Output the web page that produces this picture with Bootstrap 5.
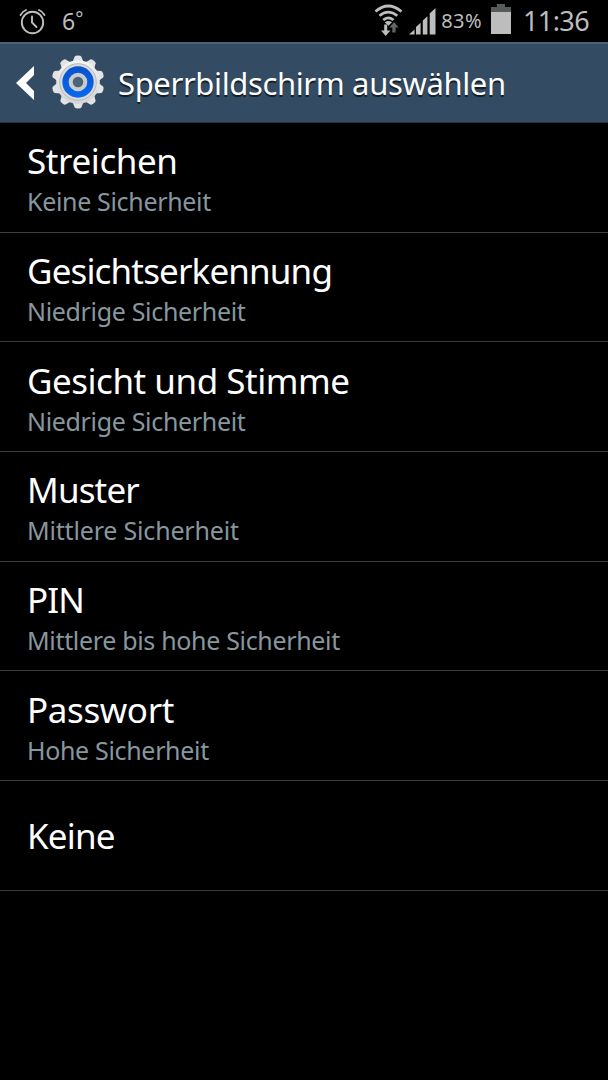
<!DOCTYPE html>
<html lang="de">
<head>
<meta charset="utf-8">
<meta name="viewport" content="width=device-width, initial-scale=1">
<title>Sperrbildschirm auswählen</title>
<link href="https://cdn.jsdelivr.net/npm/bootstrap@5.3.0/dist/css/bootstrap.min.css" rel="stylesheet">
<style>
body{background:#000;font-family:"Noto Sans",sans-serif;height:1080px;overflow:hidden}
.statusbar{height:42px;color:#bdbdbd;padding:0 19px 0 19px}
.statusbar svg{display:block;flex:none}
.temp{font-size:23px;line-height:42px;margin-left:16px}
.deg{font-size:19px;line-height:1;vertical-align:4px}
.wifi{margin-bottom:2px}
.signal{margin:0 0 1px 6px}
.pct{font-size:20px;line-height:42px;letter-spacing:.4px;margin-left:4px}
.battery{margin:0 0 3px 9px}
.clock{font-size:27px;line-height:40px;margin-left:12px;letter-spacing:-.6px}
.titlebar{height:81px;background:#344c63;border-top:2px solid #4b637a;border-bottom:1px solid #25333f;padding:0 0 0 15px}
.titlebar h1{font-size:31px;line-height:40px;color:#fff;text-shadow:0 2px 1px rgba(0,0,0,.65);margin-left:12px;font-weight:400;letter-spacing:-.37px}
.gear{margin:0 0 2px 15px}
.options .list-group-item{height:109.7px;background:#000;border:0;border-bottom:1px solid #3c3c3c;padding:4px 0 0 27px;border-radius:0}
.options .list-group-item:last-child{border-bottom:1px solid #3c3c3c;padding-top:2px}
.opt-title{font-size:35px;line-height:44px;color:#fff;letter-spacing:-.4px}
.opt-title.snug{letter-spacing:-.85px}
.opt-title.medium{letter-spacing:-.48px}
.opt-note{font-size:25px;line-height:36px;color:#87979f;letter-spacing:-.33px}
.opt-note.wide{letter-spacing:-.18px}
</style>
</head>
<body>
<header class="statusbar d-flex align-items-center text-nowrap">
<svg width="27" height="27" viewBox="0 0 27 27" fill="none" stroke="#bdbdbd" stroke-width="1.9" stroke-linecap="round"><circle cx="13.5" cy="14.500" r="10.700"/><path d="M13 8.500v6l4.500 4.500M1.500 7Q3.500 3.500 7 2M20 2Q23.500 3.500 25.500 7"/></svg>
<span class="temp">6<span class="deg">°</span></span>
<svg class="wifi ms-auto" width="29" height="32" viewBox="0 0 29 32" fill="none" stroke="#bdbdbd" stroke-width="2.700"><path d="M1.500 7.500Q14 -3.500 27.500 7.500M5.500 11.800Q14 4.300 23.300 11.800M9.200 16Q14 11.700 19.500 16"/><path d="M10.700 18.300Q14.300 15.700 18 18.300L14.400 21.800Z" fill="#bdbdbd" stroke="none"/><path d="M10.200 20.500v6h-3.200l4.700 5.500 4.700-5.500h-3.200v-6z" fill="#bdbdbd" stroke="none"/><path d="M18.300 28.500v-5h-3l4.700-5.500 4.600 5.500h-3v5z" fill="#5f6566" stroke="none"/></svg>
<svg class="signal" width="28" height="28" fill="#bdbdbd"><path d="M0 27.500l5.500-5v5zM7 27.500V20l4.600-4.300v11.800zM13.800 27.500V13.600l4.600-4.300v18.200zM20.700 27.500V6.500l5.800-5.500v26.500z"/></svg>
<span class="pct">83%</span>
<svg class="battery" width="20" height="31"><path fill="#565b5c" d="M0 3h6V0h8v3h6v6H0z"/><path fill="#bdbdbd" d="M0 8h20v22H0z"/></svg>
<span class="clock">11:36</span>
</header>
<nav class="titlebar d-flex align-items-center text-nowrap">
<svg width="20" height="34" viewBox="0 0 20 34"><path d="M19 0v9L11 17l8 8v9L1 17z" fill="#fff"/></svg>
<svg class="gear" width="56" height="56" viewBox="-28 -28 56 56">
<defs><linearGradient id="metal" x1="0" y1="0" x2="0" y2="1"><stop offset="0" stop-color="#f4f4f4"/><stop offset="1" stop-color="#d2d4d6"/></linearGradient>
<linearGradient id="blue" x1="0" y1="0" x2="0" y2="1"><stop offset="0" stop-color="#0752d0"/><stop offset="1" stop-color="#0869ee"/></linearGradient>
<path id="tooth" d="M-5.500-20L-3.300-25.500Q-2.700-26.500 0-26.500Q2.700-26.500 3.300-25.500L5.500-20z"/></defs>
<g fill="#e2e3e4"><use href="#tooth"/><use href="#tooth" transform="rotate(36)"/><use href="#tooth" transform="rotate(72)"/><use href="#tooth" transform="rotate(108)"/><use href="#tooth" transform="rotate(144)"/><use href="#tooth" transform="rotate(180)"/><use href="#tooth" transform="rotate(216)"/><use href="#tooth" transform="rotate(252)"/><use href="#tooth" transform="rotate(288)"/><use href="#tooth" transform="rotate(324)"/></g>
<circle r="21.800" fill="url(#metal)"/><circle r="18.300" fill="#d9dadb" stroke="#b6bbc0" stroke-width="1"/><circle r="15.700" fill="url(#blue)"/><circle r="7.300" fill="#4b6477" stroke="#c9cccf" stroke-width="4"/></svg>
<h1 class="mb-0">Sperrbildschirm auswählen</h1>
</nav>
<main class="list-group list-group-flush options text-nowrap">
<div class="list-group-item d-flex flex-column justify-content-center align-items-start"><div class="opt-title">Streichen</div><div class="opt-note">Keine Sicherheit</div></div>
<div class="list-group-item d-flex flex-column justify-content-center align-items-start"><div class="opt-title snug">Gesichtserkennung</div><div class="opt-note">Niedrige Sicherheit</div></div>
<div class="list-group-item d-flex flex-column justify-content-center align-items-start"><div class="opt-title medium">Gesicht und Stimme</div><div class="opt-note">Niedrige Sicherheit</div></div>
<div class="list-group-item d-flex flex-column justify-content-center align-items-start"><div class="opt-title snug">Muster</div><div class="opt-note wide">Mittlere Sicherheit</div></div>
<div class="list-group-item d-flex flex-column justify-content-center align-items-start"><div class="opt-title snug">PIN</div><div class="opt-note">Mittlere bis hohe Sicherheit</div></div>
<div class="list-group-item d-flex flex-column justify-content-center align-items-start"><div class="opt-title">Passwort</div><div class="opt-note">Hohe Sicherheit</div></div>
<div class="list-group-item d-flex flex-column justify-content-center align-items-start"><div class="opt-title snug">Keine</div></div>
</main>
<script src="https://cdn.jsdelivr.net/npm/bootstrap@5.3.0/dist/js/bootstrap.bundle.min.js"></script>
</body>
</html>
